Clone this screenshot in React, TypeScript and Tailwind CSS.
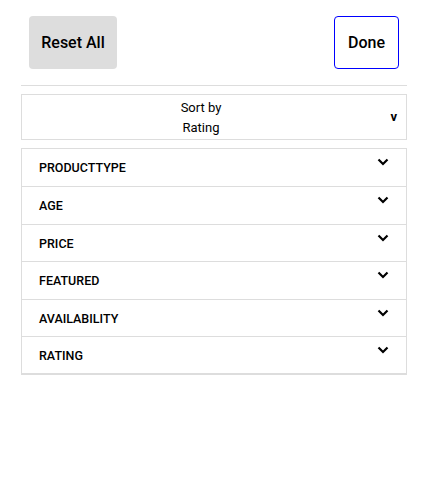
import React from "react";

const filters = ["PRODUCTTYPE", "AGE", "PRICE", "FEATURED", "AVAILABILITY", "RATING"];

function Chevron() {
  return (
    <svg width="12" height="8" viewBox="0 0 12 8" className="mt-[9px]">
      <path d="M1.5 1.5 L6 6 L10.5 1.5" fill="none" stroke="#000" strokeWidth="2.2" />
    </svg>
  );
}

export default function App() {
  return (
    <div className="w-[428px] h-[481px] bg-white px-[21px] pt-4 font-['Roboto',sans-serif] text-black">
      <div className="flex justify-between px-2">
        <button className="w-[88px] h-[53px] rounded bg-[#dddddd] text-[16px] font-medium">
          Reset All
        </button>
        <button className="w-[65px] h-[53px] rounded border border-[#0000ff] text-[16px] font-medium">
          Done
        </button>
      </div>
      <div className="mt-4 border-t border-[#dddddd]" />
      <div className="mt-2 h-[46px] border border-[#dddddd] flex items-center">
        <div className="flex-1 text-center text-[13px] leading-5 pt-[2px]">
          <div>Sort by</div>
          <div>Rating</div>
        </div>
        <span className="w-[26px] pr-[9px] text-right text-[13px] font-bold">v</span>
      </div>
      <div className="mt-2 border border-[#dddddd] border-b-2">
        {filters.map((f, i) => (
          <div
            key={f}
            className={
              "h-[37.4px] flex justify-between pl-[17px] pr-[17px] " +
              (i > 0 ? "border-t border-[#dddddd]" : "")
            }
          >
            <span className="text-[12.5px] font-medium leading-[37px]">{f}</span>
            <Chevron />
          </div>
        ))}
      </div>
    </div>
  );
}
